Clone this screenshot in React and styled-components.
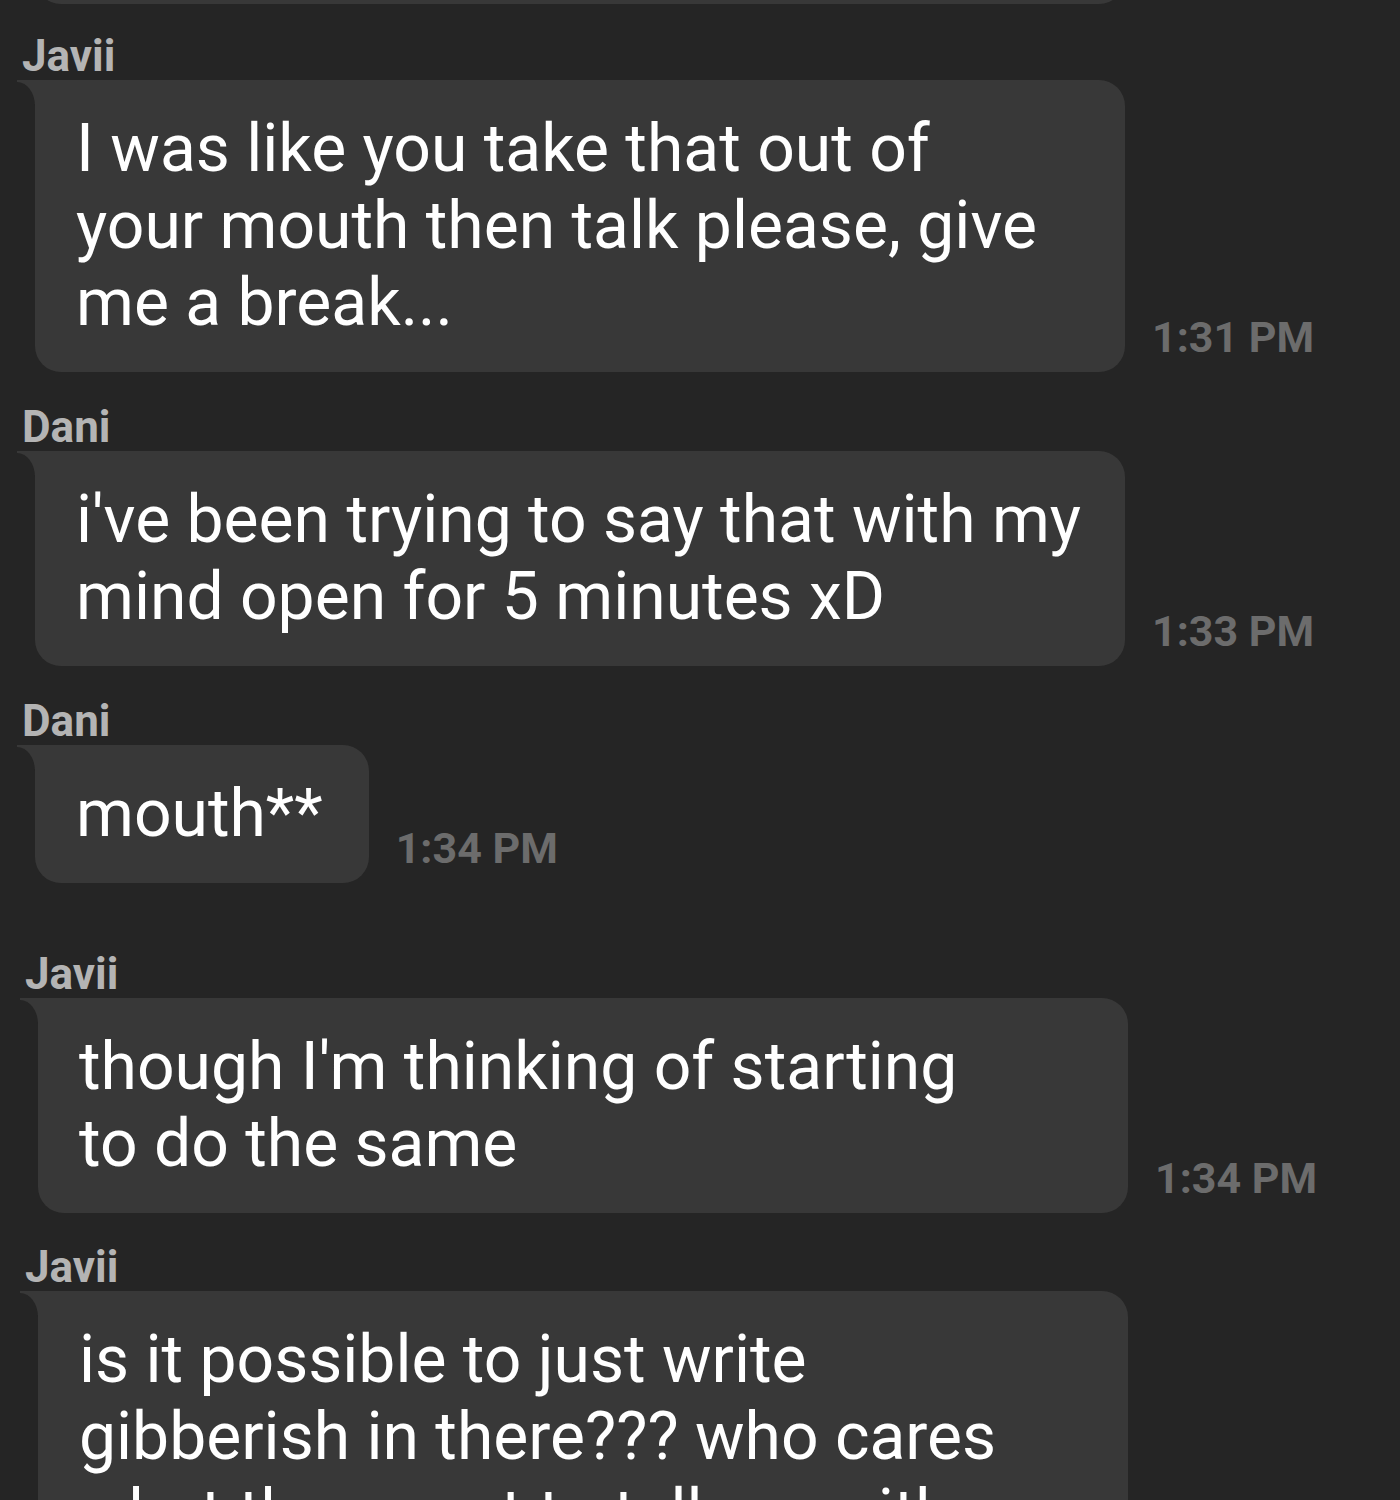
import React from 'react';
import styled, { createGlobalStyle } from 'styled-components';

const BG = '#252525';
const BUBBLE = '#383838';

const GlobalStyle = createGlobalStyle`
  html, body {
    margin: 0;
    padding: 0;
    background: ${BG};
  }
  body {
    font-family: Roboto, "Noto Sans", "Liberation Sans", sans-serif;
    height: 1500px;
    overflow: hidden;
  }
`;

const ChatList = styled.div`
  display: flex;
  flex-direction: column;
`;

const Group = styled.div`
  display: flex;
  flex-direction: column;
  margin-top: ${(p) => p.$gap}px;
  padding-left: ${(p) => p.$shift || 0}px;
`;

const Sender = styled.div`
  font-size: 44px;
  line-height: 44px;
  font-weight: 700;
  color: #b4b4b4;
  padding-left: 22px;
  margin-bottom: 2px;
`;

const Row = styled.div`
  display: flex;
  align-items: flex-end;
  padding-left: 35px;
`;

const Bubble = styled.div`
  position: relative;
  box-sizing: border-box;
  width: ${(p) => (p.$fill ? '1090px' : 'auto')};
  flex-shrink: 0;
  background: ${BUBBLE};
  color: #ffffff;
  font-size: 66px;
  line-height: 77px;
  padding: 30px 46px 31px 41px;
  border-radius: 0 26px 26px 26px;
  white-space: pre;

  /* little tail on the top left */
  &::before {
    content: '';
    position: absolute;
    left: -18px;
    top: 0;
    width: 18px;
    height: 24px;
    background: ${BUBBLE};
  }
  &::after {
    content: '';
    position: absolute;
    left: -18px;
    top: 2px;
    width: 18px;
    height: 24px;
    background: ${BG};
    border-top-right-radius: 100% 100%;
  }
`;

const PrevBubble = styled(Bubble)`
  height: 120px;
  margin-top: -116px;
`;

const Time = styled.div`
  font-size: 43px;
  line-height: 43px;
  font-weight: 700;
  color: #6c6c6c;
  margin-left: 27px;
  margin-bottom: 13px;
  white-space: nowrap;
`;

const messages = [
  {
    sender: 'Javii',
    gap: 30,
    time: '1:31 PM',
    fill: true,
    text: 'I was like you take that out of\nyour mouth then talk please, give\nme a break...',
  },
  {
    sender: 'Dani',
    gap: 33,
    time: '1:33 PM',
    fill: true,
    text: "i've been trying to say that with my\nmind open for 5 minutes xD",
  },
  {
    sender: 'Dani',
    gap: 33,
    time: '1:34 PM',
    text: 'mouth**',
  },
  {
    sender: 'Javii',
    gap: 69,
    time: '1:34 PM',
    fill: true,
    shift: 3,
    text: "though I'm thinking of starting\nto do the same",
  },
  {
    sender: 'Javii',
    gap: 32,
    time: '',
    fill: true,
    shift: 3,
    text: 'is it possible to just write\ngibberish in there??? who cares\nwhat they want to tell me with',
  },
];

export default function App() {
  return (
    <>
      <GlobalStyle />
      <ChatList>
        <Row>
          <PrevBubble $fill />
        </Row>
        {messages.map((m, i) => (
          <Group key={i} $gap={m.gap} $shift={m.shift}>
            <Sender>{m.sender}</Sender>
            <Row>
              <Bubble $fill={m.fill}>{m.text}</Bubble>
              {m.time && <Time>{m.time}</Time>}
            </Row>
          </Group>
        ))}
      </ChatList>
    </>
  );
}
